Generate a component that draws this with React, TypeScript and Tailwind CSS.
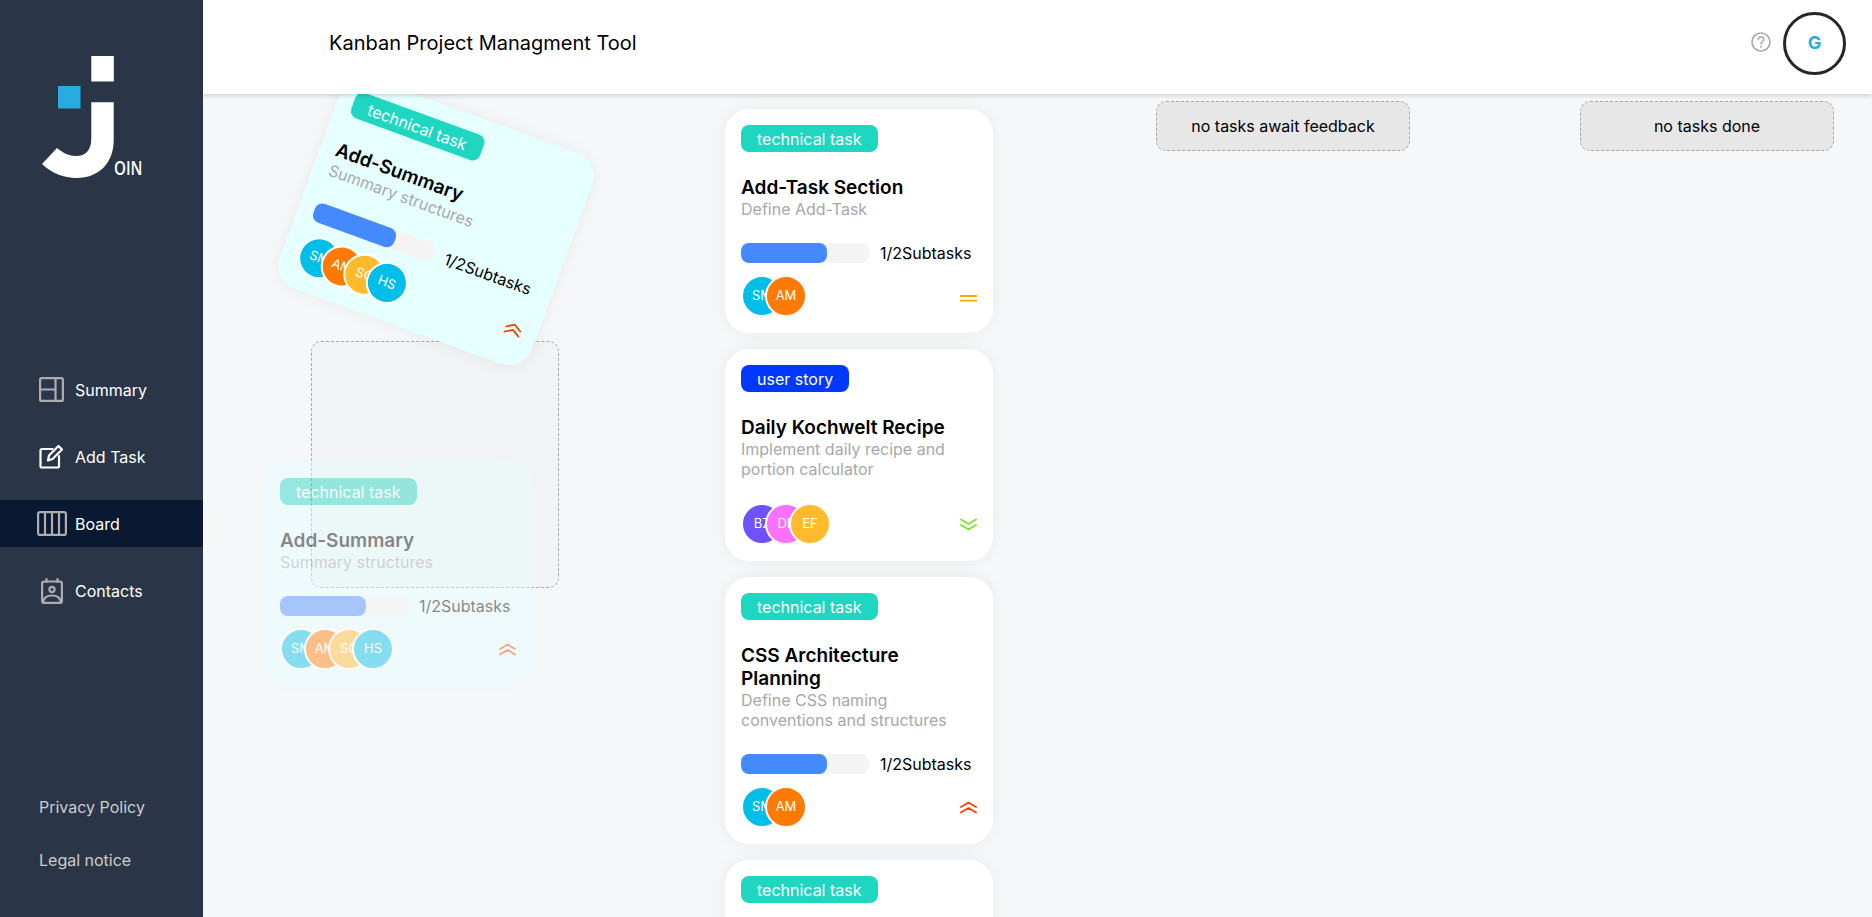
import React from "react"

type Task = {
  tag: string
  tagClass: string
  title: string
  desc: string
  progress?: boolean
  people: { label: string; color: string }[]
  priority: "urgent" | "medium" | "low"
}

const SM = { label: "SM", color: "bg-[#00bee8]" }
const AM = { label: "AM", color: "bg-[#ff7a00]" }
const SC = { label: "SC", color: "bg-[#ffbb2b]" }
const HS = { label: "HS", color: "bg-[#00bee8]" }

const summaryTask: Task = {
  tag: "technical task",
  tagClass: "bg-[#1fd7c1]",
  title: "Add-Summary",
  desc: "Summary structures",
  progress: true,
  people: [SM, AM, SC, HS],
  priority: "urgent",
}

const tasks: Task[] = [
  {
    tag: "technical task",
    tagClass: "bg-[#1fd7c1]",
    title: "Add-Task Section",
    desc: "Define Add-Task",
    progress: true,
    people: [SM, AM],
    priority: "medium",
  },
  {
    tag: "user story",
    tagClass: "bg-[#0038ff]",
    title: "Daily Kochwelt Recipe",
    desc: "Implement daily recipe and portion calculator",
    people: [
      { label: "BZ", color: "bg-[#6e52ff]" },
      { label: "DE", color: "bg-[#fc71ff]" },
      { label: "EF", color: "bg-[#ffbb2b]" },
    ],
    priority: "low",
  },
  {
    tag: "technical task",
    tagClass: "bg-[#1fd7c1]",
    title: "CSS Architecture Planning",
    desc: "Define CSS naming conventions and structures",
    progress: true,
    people: [SM, AM],
    priority: "urgent",
  },
]

const PriorityIcon = ({ level }: { level: Task["priority"] }) => {
  if (level === "medium") {
    return (
      <svg width="17" height="13" viewBox="0 0 17 13" fill="none" stroke="#ffa800" strokeWidth="1.8">
        <path d="M0 6h17M0 10.600h17" />
      </svg>
    )
  }
  if (level === "low") {
    return (
      <svg width="17" height="13" viewBox="0 0 17 13" fill="none" stroke="#7ae229" strokeWidth="1.8" strokeLinecap="round" strokeLinejoin="round">
        <path d="M1 1.500l7.500 4.500L16 1.500M1 7l7.500 4.500L16 7" />
      </svg>
    )
  }
  return (
    <svg width="17" height="13" viewBox="0 0 17 13" fill="none" stroke="#ff3d00" strokeWidth="1.8" strokeLinecap="round" strokeLinejoin="round">
      <path d="M1 6l7.500-4.500L16 6M1 11.500L8.500 7 16 11.500" />
    </svg>
  )
}

const TaskCard = ({ task, className }: { task: Task; className?: string }) => (
  <div className={`w-[268px] shrink-0 rounded-[24px] px-4 pt-4 pb-4 ${className ?? "bg-white shadow-[0_0_18px_rgba(0,0,0,0.06)]"}`}>
    <div className={`inline-flex h-[27px] items-center rounded-lg px-4 text-base text-white ${task.tagClass}`}>
      {task.tag}
    </div>
    <h3 className="mt-6 pr-6 text-[19px] leading-[23px] font-semibold text-black">{task.title}</h3>
    <p className="pr-6 text-base leading-5 text-[#a8a8a8]">{task.desc}</p>
    {task.progress ? (
      <div className="mt-6 flex items-center gap-[11px]">
        <div className="h-5 w-32 rounded-lg bg-[#f4f4f4]">
          <div className="h-5 w-[86px] rounded-lg bg-[#4589ff]" />
        </div>
        <span className="text-base leading-5 whitespace-nowrap text-black">1/2Subtasks</span>
      </div>
    ) : null}
    <div className={`flex items-center justify-between ${task.progress ? "mt-3" : "mt-6"}`}>
      <div className="flex">
        {task.people.map((p, i) => (
          <div
            key={p.label}
            className={`flex h-[42px] w-[42px] items-center justify-center rounded-full border-2 border-white text-[13px] text-white ${p.color} ${i > 0 ? "-ml-[18px]" : ""}`}
          >
            {p.label}
          </div>
        ))}
      </div>
      <PriorityIcon level={task.priority} />
    </div>
  </div>
)

const EmptyColumn = ({ text }: { text: string }) => (
  <div className="mx-auto flex h-[50px] w-[254px] items-center justify-center rounded-[10px] border border-dashed border-[#a8a8a8] bg-[#e7e7e7] text-base text-black">
    {text}
  </div>
)

const navIcons = {
  summary: (
    <svg width="25" height="25" viewBox="0 0 25 25" fill="none" stroke="#adadad" strokeWidth="2.200" className="ml-[2px]">
      <rect x="1.100" y="1.100" width="22.800" height="22.800" rx="1.500" />
      <path d="M16.500 1v23M1 12.500h15.500" />
    </svg>
  ),
  add: (
    <svg width="25" height="25" viewBox="0 0 25 25" fill="none" stroke="#fff" strokeWidth="2.200" strokeLinejoin="round" strokeLinecap="round" className="ml-[2px]">
      <path d="M13.500 5H3a1.500 1.500 0 0 0-1.500 1.500V22A1.500 1.500 0 0 0 3 23.500h15.500A1.500 1.500 0 0 0 20 22V12" />
      <path d="M9 16.500l1-5L19.500 2l3.500 3.500L13.500 15z" />
    </svg>
  ),
  board: (
    <svg width="30" height="25" viewBox="0 0 30 25" fill="none" stroke="#adadad" strokeWidth="2.200">
      <rect x="1.100" y="1.100" width="27.800" height="22.800" rx="2" />
      <path d="M8 1v23M15 1v23M22 1v23" />
    </svg>
  ),
  contacts: (
    <svg width="22" height="26" viewBox="0 0 22 26" fill="none" stroke="#adadad" strokeWidth="2.200" strokeLinecap="round" className="ml-[4px]">
      <rect x="1.100" y="3.500" width="19.800" height="21.400" rx="2" />
      <path d="M5.500 1v3M16.500 1v3" />
      <circle cx="11" cy="11.500" r="2.600" />
      <path d="M2 24c1-5 5-6.500 9-6.500s8 1.500 9 6.500" />
    </svg>
  ),
}

const NavItem = ({ icon, label, active }: { icon: React.ReactNode; label: string; active?: boolean }) => (
  <div className={`flex h-[47px] items-center pl-[37px] ${active ? "bg-[#091931]" : ""}`}>
    <span className="flex w-[38px] items-center">{icon}</span>
    <span className="text-base text-white">{label}</span>
  </div>
)

const Logo = () => (
  <div className="relative h-[122px] w-[100px]">
    <svg width="100" height="122" viewBox="42 56 100 122" className="absolute inset-0">
      <rect x="91.300" y="56" width="22.500" height="25.500" fill="#fff" />
      <rect x="58" y="86" width="22.500" height="22.500" fill="#29abe2" />
      <path
        d="M91.300 102.300h22.400V140c0 23-15 38-37 38-13 0-25-5-34.700-14l15-16c6 5 12 8 19 8 10 0 15.300-6 15.300-18z"
        fill="#fff"
      />
    </svg>
    <span className="absolute top-[99px] left-[72px] origin-left scale-x-[0.8] font-['Open_Sans',sans-serif] text-[19px] leading-[26px] font-semibold text-white">
      OIN
    </span>
  </div>
)

export default function App() {
  return (
    <div className="flex h-screen overflow-hidden bg-[#f6f7f8] font-['Inter',sans-serif]">
      <aside className="flex w-[203px] shrink-0 flex-col bg-[#2a3647]">
        <div className="pt-[56px] pl-[42px]">
          <Logo />
        </div>
        <nav className="mt-[188px] flex flex-col gap-5">
          <NavItem icon={navIcons.summary} label="Summary" />
          <NavItem icon={navIcons.add} label="Add Task" />
          <NavItem icon={navIcons.board} label="Board" active />
          <NavItem icon={navIcons.contacts} label="Contacts" />
        </nav>
        <div className="mt-auto flex flex-col gap-[33px] pb-[47px] pl-[39px] text-base leading-5 text-[#cdcdcd]">
          <span>Privacy Policy</span>
          <span>Legal notice</span>
        </div>
      </aside>

      <div className="flex min-w-0 flex-1 flex-col">
        <header className="relative z-10 flex h-[94px] shrink-0 items-center justify-between bg-white pr-[26px] pb-2 pl-[126px] shadow-[0_2px_4px_rgba(0,0,0,0.15)]">
          <h1 className="text-[20px] text-black">Kanban Project Managment Tool</h1>
          <div className="flex items-center gap-[12px]">
            <svg width="20" height="20" viewBox="0 0 20 20" fill="none" className="-mt-[3px]">
              <circle cx="10" cy="10" r="9" stroke="#a8a8a8" strokeWidth="1.600" />
              <path d="M7.300 7.800c0-1.700 1.200-2.800 2.800-2.800s2.700 1 2.700 2.400c0 2.200-2.800 2.200-2.800 4.600" stroke="#a8a8a8" strokeWidth="1.500" strokeLinecap="round" />
              <circle cx="10" cy="14.800" r="1" fill="#a8a8a8" />
            </svg>
            <div className="flex h-[63px] w-[63px] items-center justify-center rounded-full border-[3px] border-[#262626] text-lg font-bold text-[#29abe2]">
              G
            </div>
          </div>
        </header>

        <main className="flex flex-1 gap-[156px] overflow-hidden pl-[98px]">
          <section className="relative mt-[247px] w-[268px] shrink-0">
            <div className="mx-auto h-[247px] w-[248px] rounded-[10px] border border-dashed border-[#a8a8a8] bg-black/[0.015]" />
            <div className="absolute top-[121px] -left-[37px] opacity-45">
              <TaskCard task={summaryTask} className="bg-[#e6ffff] shadow-[0_0_12px_#e6ffff]" />
            </div>
            <div className="absolute -top-[232px] left-[1px] rotate-[20deg]">
              <TaskCard task={summaryTask} className="bg-[#e6ffff] shadow-[0_0_18px_rgba(0,0,0,0.06)]" />
            </div>
          </section>

          <section className="flex w-[268px] shrink-0 flex-col gap-4 pt-[15px]">
            {tasks.map((t) => (
              <TaskCard key={t.title} task={t} />
            ))}
            <div className="h-[224px] w-[268px] shrink-0 rounded-[24px] bg-white px-4 pt-4 shadow-[0_0_18px_rgba(0,0,0,0.06)]">
              <div className="inline-flex h-[27px] items-center rounded-lg bg-[#1fd7c1] px-4 text-base text-white">
                technical task
              </div>
            </div>
          </section>

          <section className="w-[268px] shrink-0 pt-[7px]">
            <EmptyColumn text="no tasks await feedback" />
          </section>
          <section className="w-[268px] shrink-0 pt-[7px]">
            <EmptyColumn text="no tasks done" />
          </section>
        </main>
      </div>
    </div>
  )
}
